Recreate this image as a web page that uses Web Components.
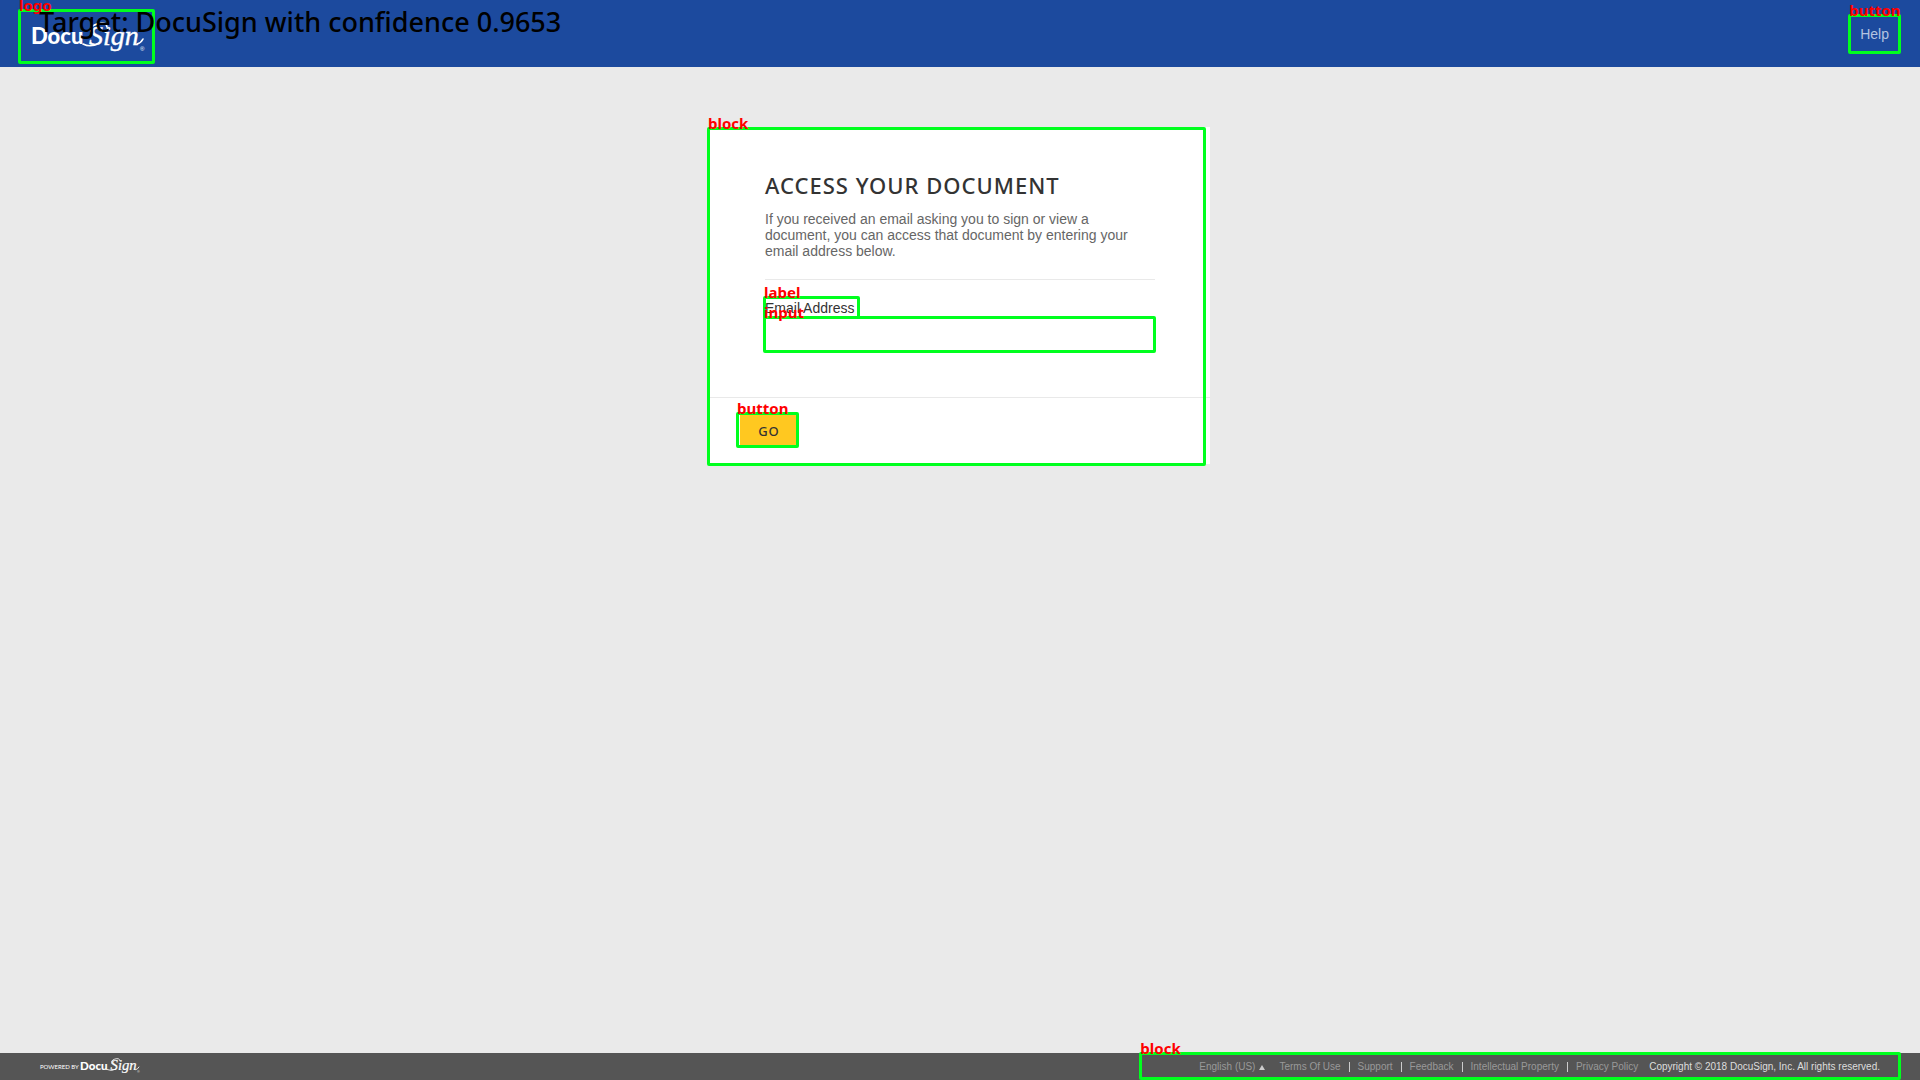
<!DOCTYPE html>
<html lang="en">
<head>
<meta charset="utf-8">
<title>Access your document</title>
<style>
html,body{margin:0;height:100%}
body{font-family:"Liberation Sans",Arial,sans-serif;font-size:14px;background:#eaeaea;color:#333}
</style>
</head>
<body>
<access-page></access-page>
<script>
const define=(name,html)=>customElements.define(name,class extends HTMLElement{
  constructor(){super();this.attachShadow({mode:"open"}).innerHTML=html}
});

/* Outline with a caption, laid over its positioned parent */
customElements.define("region-box",class extends HTMLElement{
  connectedCallback(){
    if(this.shadowRoot)return;
    this.attachShadow({mode:"open"}).innerHTML=`<style>
      :host{position:absolute;inset:var(--inset,0);border:3px solid #00ff1e;border-radius:2px;box-sizing:border-box;pointer-events:none;z-index:2}
      span{position:absolute;left:-2px;top:-17px;font:bold 15px/20px "Noto Sans",sans-serif;color:#f00;white-space:nowrap}
    </style><span></span>`;
    this.shadowRoot.querySelector("span").textContent=this.getAttribute("label");
  }
});

define("brand-logo",`<style>
  :host{display:block;color:#fff}
  svg{display:block;width:100%;height:100%;overflow:visible}
  .docu{font:900 22px Lato,sans-serif}
  .sign{font:italic 28px "Liberation Serif",serif;stroke:currentColor;stroke-width:.4px}
  .reg{font:6px "Liberation Sans",sans-serif}
</style>
<svg viewBox="0 0 114 36" fill="currentColor" role="img" aria-label="DocuSign">
  <text class="docu" x="0" y="24">Docu</text>
  <text class="sign" x="58" y="25">Sign</text>
  <path d="M61 13Q57 7 66 4Q75 1 76 7M52 24Q60 28 68 23M106 24Q110 23 112 19" fill="none" stroke="currentColor" stroke-width="1.6" stroke-linecap="round"/>
  <text class="reg" x="109" y="31">®</text>
</svg>`);

define("page-header",`<style>
  :host{display:flex;justify-content:space-between;align-items:center;height:67px;background:#1c4a9e;position:relative;padding:0 19px 0 18px;box-sizing:border-box}
  .brand{position:relative;margin-top:6px;padding:11px 10px 8px 13px}
  brand-logo{width:114px;height:36px}
  .help{position:relative}
  button{font:inherit;border:0;background:none;color:#b4c4e0;padding:12px;line-height:16px;height:40px;cursor:pointer}
  p{position:absolute;left:39px;top:6px;margin:0;font:500 27px/32px "Noto Sans",sans-serif;color:#000;white-space:nowrap;z-index:3}
</style>
<div class="brand"><brand-logo></brand-logo><region-box label="logo"></region-box></div>
<p>Target: DocuSign with confidence 0.9653</p>
<div class="help"><button type="button">Help</button><region-box label="button"></region-box></div>`);

define("access-card",`<style>
  :host{display:block;position:relative;width:500px;background:#fff;--edge:#e9e9e9}
  .body{padding:44px 55px 45px;border-bottom:1px solid var(--edge)}
  h1{margin:0;font:500 22px/28px "Noto Sans",sans-serif;letter-spacing:1px;color:#333;white-space:nowrap}
  p{margin:12px 0 0;padding-bottom:20px;line-height:16px;color:#666;border-bottom:1px solid var(--edge)}
  .label{position:relative;display:inline-block;margin-top:20px}
  label{display:block;line-height:16px}
  .field{position:relative;margin-top:2px}
  input{display:block;width:100%;height:34px;box-sizing:border-box;border:1px solid #ccc;padding:0 8px;font:inherit;background:#fff;outline:0}
  .foot{display:flex;padding:16px 30px 17px}
  .go{position:relative}
  button{display:block;border:0;background:#ffc820;color:#333;height:33px;width:58px;padding:0;font:500 13px/16px "Noto Sans",sans-serif;letter-spacing:1px;cursor:pointer}
</style>
<form onsubmit="return false">
  <div class="body">
    <h1>ACCESS YOUR DOCUMENT</h1>
    <p>If you received an email asking you to sign or view a document, you can access that document by entering your email address below.</p>
    <div class="label"><label for="email">Email Address</label><region-box label="label" style="--inset:-4px -6px -3px -2px"></region-box></div>
    <div class="field"><input id="email" type="email"><region-box label="input" style="--inset:-2px -1px -1px -2px"></region-box></div>
  </div>
  <div class="foot"><div class="go"><button>GO</button><region-box label="button" style="--inset:-2px -1px -1px -4px"></region-box></div></div>
</form>
<region-box label="block" style="--inset:0 4px -2px -3px"></region-box>`);

define("page-footer",`<style>
  :host{display:flex;justify-content:space-between;align-items:center;height:27px;background:#555;padding:0 19px 0 40px;font-size:10px;line-height:12px;color:#999}
  .power{display:flex;align-items:center;gap:1px;color:#fff}
  .power span{font:6px/8px Lato,sans-serif}
  .power brand-logo{width:60px;height:19px}
  nav{position:relative;display:flex;align-items:center;padding:8px 21px 7px 60px;white-space:nowrap}
  a{color:inherit;text-decoration:none}
  button{display:flex;align-items:center;gap:4px;font:inherit;color:inherit;border:0;background:none;padding:0;margin-right:14px}
  i{width:0;border:3px solid transparent;border-top:0;border-bottom:5px solid #ccc}
  a+a{display:flex;align-items:center}
  a+a::before{content:"";width:1px;height:10px;background:#ccc;margin:0 8px 0 8px}
  small{font-size:10px;color:#ddd;margin-left:11px}
</style>
<div class="power"><span>POWERED BY</span><brand-logo></brand-logo></div>
<nav><button type="button">English (US)<i></i></button><a href="#">Terms Of Use</a><a href="#">Support</a><a href="#">Feedback</a><a href="#">Intellectual Property</a><a href="#">Privacy Policy</a><small>Copyright © 2018 DocuSign, Inc. All rights reserved.</small><region-box label="block" style="--inset:-1px 0 0 0"></region-box></nav>`);

define("access-page",`<style>
  :host{display:flex;flex-direction:column;min-height:100vh}
  main{flex:1;display:flex;justify-content:center;align-items:flex-start;padding:60px 20px}
</style>
<page-header></page-header><main><access-card></access-card></main><page-footer></page-footer>`);
</script>
</body>
</html>
